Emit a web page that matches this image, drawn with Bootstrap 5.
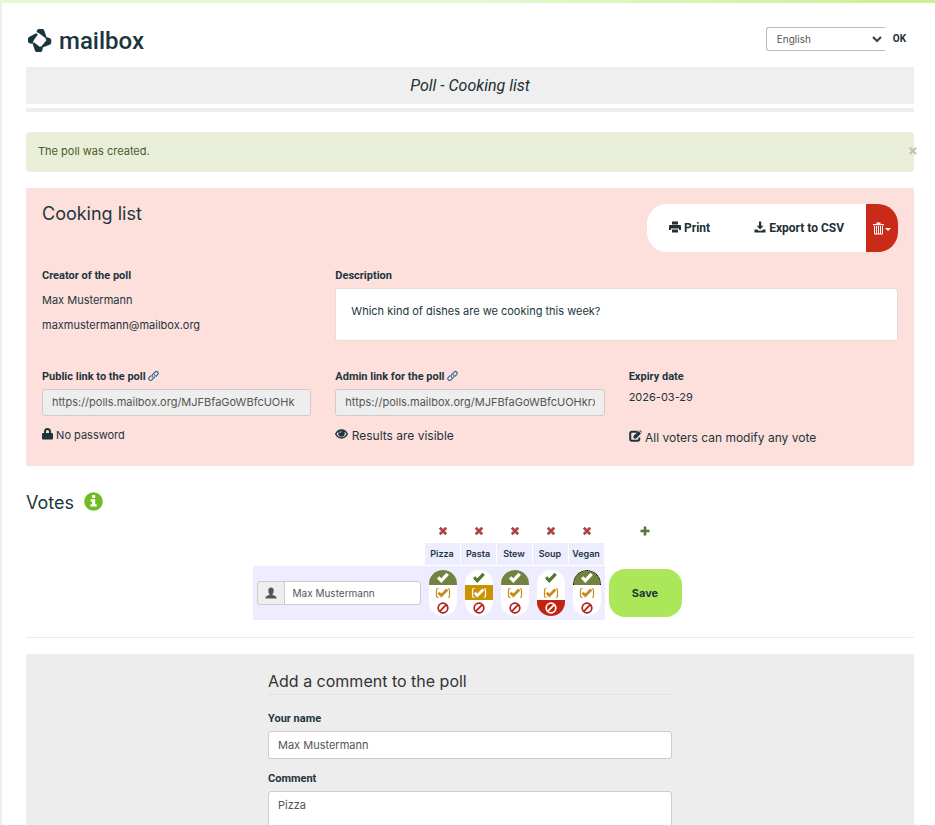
<!DOCTYPE html>
<html lang="en">
<head>
<meta charset="utf-8">
<meta name="viewport" content="width=device-width, initial-scale=1">
<title>Poll - Cooking list</title>
<link href="https://cdn.jsdelivr.net/npm/bootstrap@5.3.0/dist/css/bootstrap.min.css" rel="stylesheet">
<style>
:root { --ink: #1c3640; --line: #ccc; }
body { font-family: Inter, Roboto, sans-serif; font-size: 11px; line-height: 16px; color: var(--ink); background: #fff; }
svg { fill: currentColor; }
.top-stripe { height: 3px; background: linear-gradient(90deg, #e6f8d0 50%, #c8f090); }
.page { border-left: 2px solid #eee; padding: 24px 21px 0 24px; }
.brand { gap: 7px; padding: 1px 2px 13px; }
.wordmark { font-family: Roboto, sans-serif; font-size: 24px; line-height: 26px; font-weight: 500; }
.lang-select { width: 119px; height: 24px; font-size: 10px; line-height: 14px; padding: 0 10px; color: #555; border: 1px solid #bbb; border-right: 0; border-radius: 3px 0 0 3px; background-size: 10px; background-position: right 3px center;
  background-image: url("data:image/svg+xml,%3csvg xmlns='http://www.w3.org/2000/svg' viewBox='0 0 10 10'%3e%3cpath fill='none' stroke='%23444' stroke-width='2.200' d='M1 3l4 4 4-4'/%3e%3c/svg%3e"); }
.ok-btn { font-family: Roboto, sans-serif; font-size: 10px; line-height: 24px; font-weight: 700; padding: 0 8px; border: 0; color: #222f35; }
.title-band { background: #efefef; font-size: 16px; line-height: 37px; font-style: italic; font-weight: 400; color: #222f35; font-family: Roboto, sans-serif; }
.thin-band { height: 4px; background: #eee; margin-top: 4px; }
.notice { background: #e9eed8; color: #4c5b2b; padding: 11px 12px 13px; margin: 20px 0 16px; border-radius: 4px; }
.notice-close { border: 0; background: none; padding: 0; margin-right: -16px; color: #bdc3ae; font-size: 15px; line-height: 14px; font-weight: 700; }
.poll { background: #fddfdb; border-radius: 2px; padding: 16px 16px 19px; }
.h-big { font-size: 18px; line-height: 20px; font-weight: 400; margin: 0; }
.votes-title { line-height: 22px; margin-top: 26px; }
.info { color: #6ebd23; margin-left: 2px; }
.tools { border-radius: 20px; overflow: hidden; height: 48px; margin-bottom: 16px; }
.tools .btn { font-family: Roboto, sans-serif; font-size: 12px; line-height: 16px; font-weight: 700; border: 0; border-radius: 0; background: #fff; color: #222f35; padding: 0 22px; }
.tools .btn svg { vertical-align: -1px; }
.tools .btn.del { background: #ca2b18; color: #fff; padding: 0 7px; }
.lbl { display: block; font-family: Roboto, sans-serif; font-size: 11px; line-height: 16px; font-weight: 700; margin-bottom: 4px; }
.chain { color: #286a8c; }
.desc { background: #fff; border: 1px solid #e4dcdc; border-radius: 3px; padding: 14px 15px 21px; }
.field { font-size: 11px; line-height: 16px; padding: 5px 9px; border: 1px solid var(--line); border-radius: 3px; color: #555; }
.field.ro { background: #eee; padding-top: 4px; padding-bottom: 5px; }
.person { line-height: 17px; margin: 8px 0 0; }
.poll-top { margin-bottom: 28px; }
.state { margin-top: 11px; }
.mid { font-size: 12px; line-height: 18px; }
.votes { border-collapse: separate; border-spacing: 0; margin: 10px 6px 0 0; }
.votes th, .votes td { padding: 0; text-align: center; vertical-align: middle; }
.icon-btn { border: 0; background: none; padding: 0; margin-bottom: 7px; display: inline-flex; }
.remove { color: #ab4642; }
.add { color: #577532; }
.votes .opt-head { background: #eeecff; border-right: 1px solid #fff; height: 22px; width: 36px; font-size: 9px; font-weight: 600; }
.votes .gap-row td { height: 1px; }
.votes .lav { background: #eeecff; height: 54px; }
.votes .who { width: 172px; padding: 0 4px; }
.who .input-group-text { padding: 0 7px; background: #eee; border-color: var(--line); color: #555; border-radius: 3px 0 0 3px; }
.who .field { height: 24px; font-size: 10px; padding: 0 8px; }
.pill { width: 28px; height: 46px; border-radius: 14px; background: #fff; overflow: hidden; display: flex; flex-direction: column; margin: 0 auto; }
.pill label { height: 15px; display: flex; align-items: center; justify-content: center; }
.pill label.no { height: 16px; }
.yes { color: #577532; } .maybe { color: #c98a1c; } .no { color: #b51f15; }
.yes.on { background: #71833f; color: #fff; } .maybe.on { background: #c99400; color: #fff; } .no.on { background: #c32412; color: #fff; }
.yes.focused { border: 1px dotted #000; border-bottom: 0; border-radius: 14px 14px 0 0; }
.save-btn { background: #ace75a; color: var(--ink); font-size: 11px; font-weight: 700; width: 73px; height: 48px; border: 0; border-radius: 16px; margin-left: 4px; }
.rule { border-top: 1px solid #eaeaea; margin: 17px 0 16px; opacity: 1; }
.comment { background: #ededed; border-radius: 2px; padding: 16px 16px 32px; }
.comment legend { font-size: 16px; line-height: 22px; color: #333; border-bottom: 1px solid #e2e2e2; padding-bottom: 2px; margin-bottom: 16px; }
</style>
<script src="https://cdn.jsdelivr.net/npm/bootstrap@5.3.0/dist/js/bootstrap.bundle.min.js"></script>
</head>
<body>
<svg class="d-none" aria-hidden="true">
  <symbol id="check" viewBox="0 0 14 12"><path d="M1 6.600 3.200 4.300 5.300 6.300 10.500.8 12.900 3 5.300 11z"/></symbol>
  <symbol id="maybe" viewBox="0 0 16 14"><path d="M3.500 2.500H3Q1.500 2.500 1.500 4v6Q1.500 11.500 3 11.500h.5M13 2.500Q14.500 2.500 14.500 4v6Q14.500 11.500 13 11.500" fill="none" stroke="currentColor" stroke-width="1.200"/><path d="M2.600 7.800 4.600 5.800 6.300 7.400 11.300 2.400 13.300 4.400 6.300 11.600z"/></symbol>
  <symbol id="ban" viewBox="0 0 12 12"><path d="M6 1.200a4.800 4.800 0 1 0 0 9.600a4.800 4.800 0 0 0 0-9.600M2.700 9.300 9.300 2.700" fill="none" stroke="currentColor" stroke-width="1.700"/></symbol>
  <symbol id="cross" viewBox="0 0 10 10"><path d="M2.700.8 5 3.100 7.300.8 9.200 2.700 6.900 5 9.200 7.300 7.300 9.200 5 6.900 2.700 9.200.8 7.300 3.100 5 .8 2.700z"/></symbol>
  <symbol id="chain" viewBox="0 0 12 12"><g fill="none" stroke="currentColor" stroke-width="1.200" stroke-linecap="round"><path d="M5 7.200A2 2 0 0 1 5 4.500L7.600 1.700a2 2 0 0 1 2.900 2.800L9 6.200"/><path d="M7 4.600a2 2 0 0 1 0 2.800L4.300 10.200a2 2 0 0 1-2.900-2.800L3 5.800"/></g></symbol>
</svg>
<div class="top-stripe"></div>
<div class="page">
  <header class="d-flex justify-content-between">
    <a href="#" class="brand d-flex align-items-center text-reset text-decoration-none" aria-label="mailbox">
      <svg width="24" height="24" viewBox="0 0 24 24"><path d="M9.300.8 10.500 0H15L16 1 18.400 7.600 17.600 9.200 11.800 4.800 8.500 3z"/><path d="M18.600 8 22.500 9.600 23.300 11V14L22.300 15.500 14.600 18.400 13.600 17 18.400 11.300 17.300 9.500z"/><path d="M14 17.300 15 18.600 14 22.200 13 23H8.300L7.200 22.200 4.700 15 6 13.300 11.600 17.800z"/><path d="M4.600 15 .8 14 0 12.800V9.200L1 8 8 4.300 9.900 5.500 5.700 11.200z"/></svg>
      <span class="wordmark">mailbox</span>
    </a>
    <form class="d-flex align-items-start">
      <select class="form-select lang-select" aria-label="Language"><option>English</option></select>
      <button type="button" class="btn ok-btn">OK</button>
    </form>
  </header>
  <h1 class="title-band text-center m-0">Poll - Cooking list</h1>
  <div class="thin-band"></div>

  <div class="notice d-flex justify-content-between" role="alert">
    <span>The poll was created.</span>
    <button type="button" class="notice-close" aria-label="Close">×</button>
  </div>

  <section class="poll">
    <div class="d-flex justify-content-between align-items-start">
      <h2 class="h-big">Cooking list</h2>
      <div class="tools d-flex">
        <button type="button" class="btn"><svg width="12" height="12" viewBox="0 0 12 12"><path d="M3 .5h6v3H3zM1 4h10q1 0 1 1v4h-2V7.500H2V9H0V5q0-1 1-1zM3 8.500h6v3H3z"/></svg> Print</button>
        <button type="button" class="btn"><svg width="12" height="12" viewBox="0 0 12 12"><path d="M5 .5h2.200v4.300H9.500L6.100 8.500 2.700 4.800H5zM.5 8.500h2.800L4.500 9.700h3.200L9 8.500h2.500v3H.5z"/></svg> Export to CSV</button>
        <button type="button" class="btn del d-flex align-items-center" aria-label="Delete"><svg width="11" height="13" viewBox="0 0 11 13"><path d="M0 2H3.500V.5h4V2H11v1.300H0z"/><path d="M1.500 4v8h8V4M3.500 4v8M5.500 4v8M7.500 4v8" fill="none" stroke="currentColor"/></svg><svg width="7" height="4" class="mt-1" viewBox="0 0 7 4"><path d="M1 0h6L4 3z"/></svg></button>
      </div>
    </div>
    <div class="row gx-4 poll-top">
      <div class="col-4">
        <span class="lbl">Creator of the poll</span>
        <p class="person">Max Mustermann</p>
        <p class="person">maxmustermann@mailbox.org</p>
      </div>
      <div class="col-8">
        <span class="lbl">Description</span>
        <div class="desc">Which kind of dishes are we cooking this week?</div>
      </div>
    </div>
    <div class="row gx-4">
      <div class="col-4">
        <label class="lbl" for="pub">Public link to the poll <a href="#" class="text-reset" aria-label="Public link"><svg width="11" height="12" class="align-text-top chain"><use href="#chain"/></svg></a></label>
        <input id="pub" class="form-control field ro" readonly value="https://polls.mailbox.org/MJFBfaGoWBfcUOHk">
        <div class="state"><svg width="11" height="12" viewBox="0 0 11 12" class="align-text-top"><path d="M1 5h1V3.500a3.500 3.500 0 0 1 7 0V5h1q1 0 1 1v4.500q0 1-1 1H1q-1 0-1-1V6q0-1 1-1zM4 5h3V3.500a1.500 1.500 0 0 0-3 0z"/></svg> No password</div>
      </div>
      <div class="col-4">
        <label class="lbl" for="adm">Admin link for the poll <a href="#" class="text-reset" aria-label="Admin link"><svg width="11" height="12" class="align-text-top chain"><use href="#chain"/></svg></a></label>
        <input id="adm" class="form-control field ro" readonly value="https://polls.mailbox.org/MJFBfaGoWBfcUOHkrxq7">
        <div class="state mid"><svg width="13" height="12" viewBox="0 0 14 12" class="align-text-top"><path d="M.8 6Q3 1.700 7 1.700T13.200 6Q11 10.300 7 10.300T.8 6z" fill="none" stroke="currentColor" stroke-width="1.600"/><path fill-rule="evenodd" d="M7 2a3.500 3.500 0 1 0 0 7a3.500 3.500 0 0 0 0-7zM6.800 3A2.200 2.200 0 0 0 4.800 5h1A1.200 1.200 0 0 1 7 3.900z"/></svg> Results are visible</div>
      </div>
      <div class="col-4">
        <span class="lbl">Expiry date</span>
        <div>2026-03-29</div>
        <div class="mid pt-4"><svg width="13" height="12" viewBox="0 0 13 12" class="align-text-top"><path d="M8.500 1.700H3Q1.200 1.700 1.200 3.500V9Q1.200 10.800 3 10.800H8.500Q10.300 10.800 10.300 9V7.500" fill="none" stroke="currentColor" stroke-width="2"/><path d="M4.500 8.500V6L9.500 1 12 3.400 7 8.500zM10.300.3l.7-.3L13 2l-.4.700z"/></svg> All voters can modify any vote</div>
      </div>
    </div>
  </section>

  <h2 class="h-big votes-title d-flex align-items-start gap-2">Votes <svg width="19" height="19" viewBox="0 0 19 19" class="info"><circle cx="9.500" cy="9.500" r="9.300"/><path fill="#fff" d="M8 3h3.200v3H8zM6.500 7.300h4.700v5h1.500v2.200H6.500v-2.200H8V9.500H6.500z"/></svg></h2>

  <div class="d-flex justify-content-center">
    <table class="votes">
      <thead>
        <tr id="removeRow"><td></td></tr>
        <tr id="headRow"><td></td></tr>
      </thead>
      <tbody>
        <tr class="gap-row"><td colspan="7"></td></tr>
        <tr id="voteRow">
          <td class="lav who"><div class="input-group flex-nowrap"><span class="input-group-text"><svg width="12" height="12" viewBox="0 0 12 12"><path d="M3.300 3.500Q3.300.5 6 .5t2.700 3Q8.700 6 7.500 7.200V8Q11.500 9 11.500 10.500v1H.5v-1Q.5 9 4.500 8V7.200Q3.300 6 3.300 3.500z"/></svg></span><input class="form-control field" aria-label="Your name" value="Max Mustermann"></div></td>
        </tr>
      </tbody>
    </table>
  </div>

  <hr class="rule">

  <section class="comment">
    <form class="row gx-4 mx-0 justify-content-center">
      <fieldset class="col-6">
        <legend>Add a comment to the poll</legend>
        <label class="lbl" for="cname">Your name</label>
        <input id="cname" class="form-control field mb-2" value="Max Mustermann">
        <label class="lbl pt-1" for="ctext">Comment</label>
        <textarea id="ctext" class="form-control field" rows="4">Pizza</textarea>
      </fieldset>
    </form>
  </section>
</div>
<script>
const options = [["Pizza", "yes"], ["Pasta", "maybe"], ["Stew", "yes"], ["Soup", "no"], ["Vegan", "yes"]];
const removeRow = document.getElementById("removeRow"), headRow = document.getElementById("headRow"), voteRow = document.getElementById("voteRow");
const icons = { yes: ["check", 14, 12], maybe: ["maybe", 16, 14], no: ["ban", 12, 12] };
options.forEach(([name, vote], i) => {
  removeRow.insertAdjacentHTML("beforeend", `<td><button type="button" class="icon-btn remove" aria-label="Remove ${name}"><svg width="10" height="10"><use href="#cross"/></svg></button></td>`);
  headRow.insertAdjacentHTML("beforeend", `<th scope="col" class="opt-head">${name}</th>`);
  const parts = Object.entries(icons).map(([kind, [icon, w, h]]) => {
    const on = kind === vote;
    return `<label class="${kind}${on ? " on" : ""}${on && i === 4 ? " focused" : ""}"><input class="visually-hidden" type="radio" name="v${i}" aria-label="${name}: ${kind}"${on ? " checked" : ""}><svg width="${w}" height="${h}"><use href="#${icon}"/></svg></label>`;
  }).join("");
  voteRow.insertAdjacentHTML("beforeend", `<td class="lav"><div class="pill">${parts}</div></td>`);
});
removeRow.insertAdjacentHTML("beforeend", `<td><button type="button" class="icon-btn add ms-1" aria-label="Add option"><svg width="10" height="10" viewBox="0 0 10 10"><path d="M3.700.5h2.600v3.200h3.200v2.600H6.300v3.200H3.700V6.300H.5V3.700h3.200z"/></svg></button></td>`);
voteRow.insertAdjacentHTML("beforeend", `<td><button type="button" class="save-btn">Save</button></td>`);
</script>
</body>
</html>
